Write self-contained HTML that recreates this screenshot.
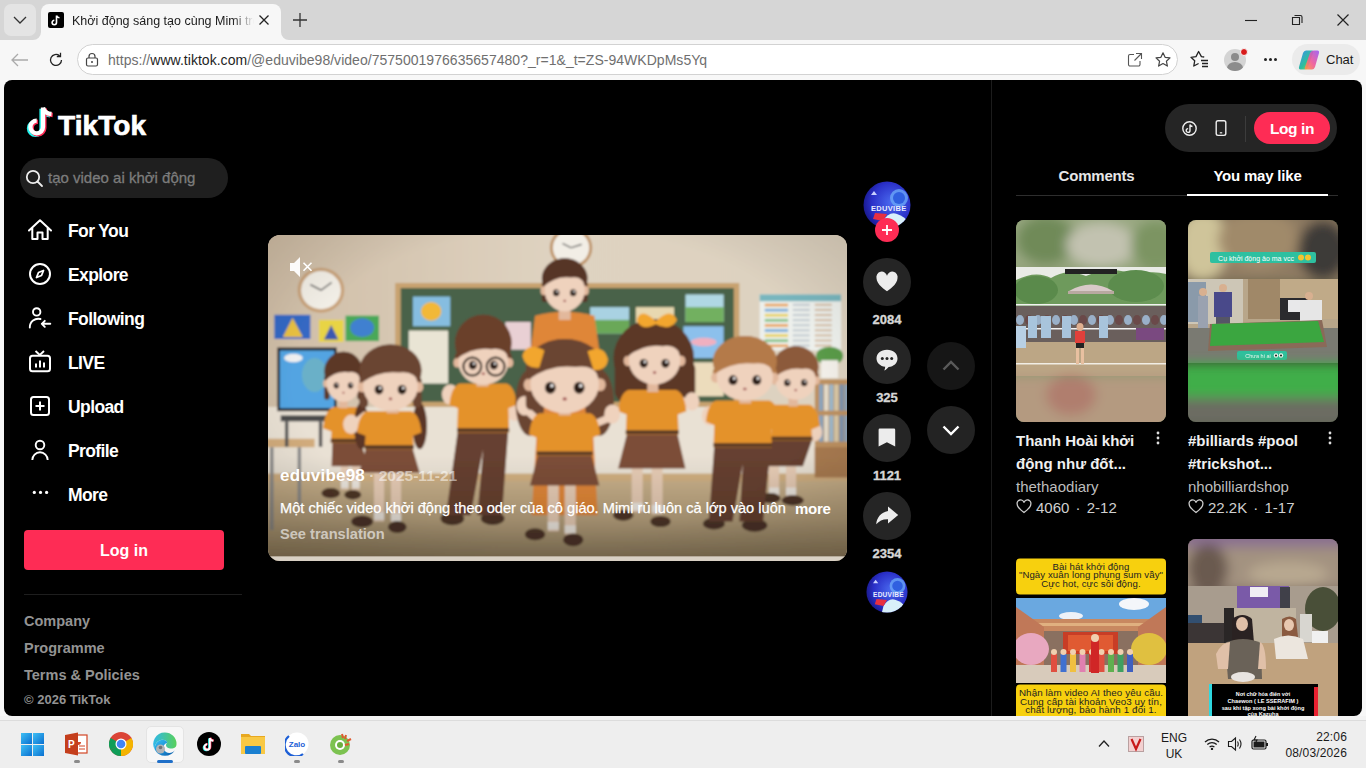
<!DOCTYPE html>
<html><head><meta charset="utf-8">
<style>
*{margin:0;padding:0;box-sizing:border-box}
html,body{width:1366px;height:768px;overflow:hidden;background:#f7f7f7;font-family:"Liberation Sans",sans-serif}
.a{position:absolute}
#tabstrip{left:0;top:0;width:1366px;height:40px;background:#d6d6d6}
#toolbar{left:0;top:40px;width:1366px;height:40px;background:#f7f7f7}
#page{left:4px;top:80px;width:1358px;height:636px;background:#000;border-radius:8px;overflow:hidden}
#taskbar{left:0;top:720px;width:1366px;height:48px;background:#eeeeee;border-top:1px solid #dcdcdc}
.nav{left:68px;color:#fff;font-weight:bold;font-size:17.5px;letter-spacing:-0.6px}
.foot{left:24px;color:#939393;font-weight:bold;font-size:14.5px}
.cnt{width:48px;text-align:center;color:#d6d6d6;font-weight:bold;font-size:13px;-webkit-text-stroke:.35px #d6d6d6}
.circ{width:48px;height:48px;border-radius:50%;background:#252525}
.ttl{color:#f0f0f0;font-weight:bold;font-size:15px;line-height:23px}
.sub{color:#bdbdbd;font-size:15px}
</style></head><body>
<!-- browser chrome -->
<div id="tabstrip" class="a"></div>
<div class="a" style="left:4px;top:4px;width:32px;height:32px;background:#e4e4e4;border-radius:7px"></div>
<svg class="a" style="left:12px;top:14px" width="16" height="12" viewBox="0 0 16 12"><path d="M2 3 L8 9 L14 3" fill="none" stroke="#333" stroke-width="1.3"/></svg>
<div class="a" style="left:41px;top:4px;width:240px;height:36px;background:#f7f7f7;border-radius:8px 8px 0 0"></div><svg class="a" style="left:0;top:0" width="300" height="40"><path d="M281 32 V40 H289 A8 8 0 0 1 281 32 Z" fill="#f7f7f7"/><path d="M41 32 V40 H33 A8 8 0 0 0 41 32 Z" fill="#f7f7f7"/></svg>
<div class="a" style="left:48px;top:12px;width:16px;height:16px;background:#000;border-radius:2px"></div>
<svg class="a" style="left:48px;top:12px" width="16" height="16" viewBox="0 0 16 16"><path d="M8.5 3.5 V10.5 A2.2 2.2 0 1 1 6.3 8.3 M8.5 3.5 Q9 5.5 11.5 5.8" fill="none" stroke="#fff" stroke-width="1.6"/></svg>
<div class="a" style="left:72px;top:14px;width:182px;height:18px;overflow:hidden;white-space:nowrap;font-size:12.5px;color:#1a1a1a;-webkit-mask-image:linear-gradient(90deg,#000 88%,transparent)">Khởi động sáng tạo cùng Mimi trong lớp</div>
<svg class="a" style="left:258px;top:14px" width="12" height="12" viewBox="0 0 12 12"><path d="M1.5 1.5 L10.5 10.5 M10.5 1.5 L1.5 10.5" stroke="#222" stroke-width="1.3"/></svg>
<svg class="a" style="left:292px;top:12px" width="16" height="16" viewBox="0 0 16 16"><path d="M8 1 V15 M1 8 H15" stroke="#333" stroke-width="1.3"/></svg>
<svg class="a" style="left:1244px;top:14px" width="14" height="12" viewBox="0 0 14 12"><path d="M1 6.5 H13" stroke="#222" stroke-width="1.1"/></svg>
<svg class="a" style="left:1290px;top:14px" width="14" height="12" viewBox="0 0 14 12"><path d="M2.5 3.5 h7 v7 h-7 z M4.5 1.5 h6 a1.5 1.5 0 0 1 1.5 1.5 v6" fill="none" stroke="#222" stroke-width="1.1"/></svg>
<svg class="a" style="left:1336px;top:14px" width="14" height="12" viewBox="0 0 14 12"><path d="M1.5 0.5 L12.5 11.5 M12.5 0.5 L1.5 11.5" stroke="#222" stroke-width="1.2"/></svg>

<div id="toolbar" class="a"></div>
<svg class="a" style="left:10px;top:52px" width="20" height="16" viewBox="0 0 20 16"><path d="M18 8 H3 M8 2 L2 8 L8 14" fill="none" stroke="#aaa" stroke-width="1.3"/></svg>
<svg class="a" style="left:47px;top:51px" width="18" height="18" viewBox="0 0 18 18"><path d="M14.5 9 A5.5 5.5 0 1 1 12.5 4.7 M13.5 1.8 V5.5 H9.8" fill="none" stroke="#222" stroke-width="1.3"/></svg>
<div class="a" style="left:77px;top:44px;width:1101px;height:31px;background:#fff;border:1px solid #d2d2d2;border-radius:16px"></div>
<svg class="a" style="left:85px;top:52px" width="14" height="15" viewBox="0 0 14 15"><rect x="1.5" y="6" width="11" height="8" rx="1.5" fill="none" stroke="#444" stroke-width="1.2"/><path d="M4 6 V4.5 A3 3 0 0 1 10 4.5 V6" fill="none" stroke="#444" stroke-width="1.2"/><circle cx="7" cy="10" r="1" fill="#444"/></svg>
<div class="a" style="left:108px;top:52px;font-size:14px;letter-spacing:0.03px;color:#6f6f6f;white-space:nowrap">https://<span style="color:#1f1f1f">www.tiktok.com</span>/@eduvibe98/video/7575001976635657480?_r=1&amp;_t=ZS-94WKDpMs5Yq</div>
<svg class="a" style="left:1127px;top:52px" width="16" height="16" viewBox="0 0 16 16"><path d="M7 2.5 H3 a1.5 1.5 0 0 0 -1.5 1.5 v8.5 a1.5 1.5 0 0 0 1.5 1.5 h8.5 a1.5 1.5 0 0 0 1.5 -1.5 V9 M9 1.5 H14.5 V7 M14.5 1.5 L7.5 8.5" fill="none" stroke="#555" stroke-width="1.1"/></svg>
<svg class="a" style="left:1154px;top:51px" width="18" height="18" viewBox="0 0 18 18"><path d="M9 1.8 L11.1 6.3 L16 6.9 L12.4 10.2 L13.4 15.1 L9 12.6 L4.6 15.1 L5.6 10.2 L2 6.9 L6.9 6.3 Z" fill="none" stroke="#444" stroke-width="1.2" stroke-linejoin="round"/></svg>
<svg class="a" style="left:1190px;top:50px" width="19" height="19" viewBox="0 0 19 19"><path d="M14.2 7 L11.4 6.6 L8.6 1.5 L6 6.6 L1 7.3 L4.7 10.8 L3.8 16 L8.6 13.5" fill="none" stroke="#222" stroke-width="1.3" stroke-linejoin="round"/><path d="M11 10.5 h7 M12 13.5 h6 M12 16.5 h6" stroke="#222" stroke-width="1.3"/></svg>
<div class="a" style="left:1224px;top:49px;width:22px;height:22px;border-radius:50%;background:#d4d4d4;overflow:hidden"><div class="a" style="left:7px;top:4px;width:8px;height:8px;border-radius:50%;background:#8c8c8c"></div><div class="a" style="left:3px;top:13px;width:16px;height:12px;border-radius:50%;background:#8c8c8c"></div></div>
<div class="a" style="left:1240px;top:48px;width:8px;height:8px;border-radius:50%;background:#d81b1b;border:1px solid #f7f7f7"></div>
<div class="a" style="left:1264px;top:58px;width:3px;height:3px;border-radius:50%;background:#222;box-shadow:5px 0 #222,10px 0 #222"></div>
<div class="a" style="left:1292px;top:44px;width:68px;height:31px;background:#ebebeb;border-radius:16px"></div>
<svg class="a" style="left:1297px;top:48px" width="24" height="24" viewBox="0 0 24 24"><defs><linearGradient id="cp1" x1="0" y1="0" x2="1" y2="1"><stop offset="0" stop-color="#3b8df5"/><stop offset=".55" stop-color="#2fbf9a"/><stop offset="1" stop-color="#a8d84a"/></linearGradient><linearGradient id="cp2" x1="1" y1="0" x2="0" y2="1"><stop offset="0" stop-color="#9a5cf5"/><stop offset=".55" stop-color="#f05a9a"/><stop offset="1" stop-color="#ff9a3a"/></linearGradient></defs><path d="M9 2.5 H15 Q17 2.5 16 5 L11 19 Q10 21.5 7.5 21.5 H3.5 Q1.5 21.5 2 19 L6 5 Q7 2.5 9 2.5 Z" fill="url(#cp1)"/><path d="M16.5 2.5 H20.5 Q22.5 2.5 22 5 L18 19 Q17 21.5 15 21.5 H9 Q7 21.5 8 19 L13 5 Q14 2.5 16.5 2.5 Z" fill="url(#cp2)" opacity=".92"/></svg>
<div class="a" style="left:1326px;top:52px;font-size:13px;color:#1a1a1a">Chat</div>

<!-- page -->
<div id="page" class="a"></div>
<!-- sidebar -->
<svg class="a" style="left:24px;top:103px" width="34" height="36" viewBox="0 0 34 36">
<path d="M19 4.5 V24 A6.3 6.3 0 1 1 12.7 17.7 M19 4.5 Q20.5 10.5 27.5 11" fill="none" stroke="#25f4ee" stroke-width="4.6" transform="translate(-1.3,1.3)"/>
<path d="M19 4.5 V24 A6.3 6.3 0 1 1 12.7 17.7 M19 4.5 Q20.5 10.5 27.5 11" fill="none" stroke="#fe2c55" stroke-width="4.6" transform="translate(1.2,1)"/>
<path d="M19 4.5 V24 A6.3 6.3 0 1 1 12.7 17.7 M19 4.5 Q20.5 10.5 27.5 11" fill="none" stroke="#fff" stroke-width="4.3"/>
</svg>
<div class="a" style="left:58px;top:110px;font-size:28px;font-weight:bold;color:#fff;letter-spacing:0.1px;-webkit-text-stroke:0.7px #fff">TikTok</div>
<div class="a" style="left:20px;top:158px;width:208px;height:40px;border-radius:20px;background:#1f1f1f"></div>
<svg class="a" style="left:25px;top:169px" width="19" height="19" viewBox="0 0 19 19"><circle cx="8" cy="8" r="6.2" fill="none" stroke="#eee" stroke-width="1.8"/><path d="M12.5 12.5 L17 17" stroke="#eee" stroke-width="1.8" stroke-linecap="round"/></svg>
<div class="a" style="left:48px;top:169px;font-size:15px;color:#7c7c7c;-webkit-text-stroke:.3px #7c7c7c">tạo video ai khởi động</div>

<svg class="a" style="left:28px;top:218px" width="24" height="24" viewBox="0 0 24 24"><path d="M1 12.5 L12 2.3 L23 12.5 M4.3 9.8 V21 H9.5 V14.5 H14.5 V21 H19.7 V9.8" fill="none" stroke="#fff" stroke-width="2" stroke-linejoin="round" stroke-linecap="round"/></svg>
<div class="a nav" style="top:220.5px">For You</div>
<svg class="a" style="left:28px;top:262px" width="24" height="24" viewBox="0 0 24 24"><circle cx="12" cy="12" r="10" fill="none" stroke="#fff" stroke-width="2"/><path d="M15.5 8.5 L13.5 13.5 L8.5 15.5 L10.5 10.5 Z" fill="none" stroke="#fff" stroke-width="1.8" stroke-linejoin="round"/></svg>
<div class="a nav" style="top:264.5px">Explore</div>
<svg class="a" style="left:28px;top:306px" width="24" height="24" viewBox="0 0 24 24"><circle cx="8.7" cy="5.9" r="3.7" fill="none" stroke="#fff" stroke-width="1.9"/><path d="M1.8 21.5 A8.5 8.5 0 0 1 12.5 13 M22.3 17.8 H13.8 M16.8 14.8 L13.8 17.8 L16.8 20.8" fill="none" stroke="#fff" stroke-width="1.9" stroke-linecap="round" stroke-linejoin="round"/></svg>
<div class="a nav" style="top:308.5px">Following</div>
<svg class="a" style="left:28px;top:350px" width="24" height="24" viewBox="0 0 24 24"><rect x="2" y="5.8" width="20" height="15.5" rx="2.5" fill="none" stroke="#fff" stroke-width="2"/><path d="M7.5 1 L11.8 5 L16 1" fill="none" stroke="#fff" stroke-width="1.9"/><path d="M8 17.5 V13.5 M12 17.5 V10.5 M16 17.5 V12.5" stroke="#fff" stroke-width="2"/></svg>
<div class="a nav" style="top:352.5px">LIVE</div>
<svg class="a" style="left:28px;top:394px" width="24" height="24" viewBox="0 0 24 24"><rect x="3" y="3" width="18" height="18" rx="2.5" fill="none" stroke="#fff" stroke-width="2"/><path d="M12 7.5 V16.5 M7.5 12 H16.5" stroke="#fff" stroke-width="2"/></svg>
<div class="a nav" style="top:396.5px">Upload</div>
<svg class="a" style="left:28px;top:438px" width="24" height="24" viewBox="0 0 24 24"><circle cx="12" cy="7" r="4.3" fill="none" stroke="#fff" stroke-width="1.9"/><path d="M4.3 22 A7.7 7.7 0 0 1 19.7 22" fill="none" stroke="#fff" stroke-width="1.9"/></svg>
<div class="a nav" style="top:440.5px">Profile</div>
<svg class="a" style="left:28px;top:482px" width="24" height="24" viewBox="0 0 24 24"><circle cx="6.3" cy="10.4" r="1.6" fill="#fff"/><circle cx="12.5" cy="10.4" r="1.6" fill="#fff"/><circle cx="18.6" cy="10.4" r="1.6" fill="#fff"/></svg>
<div class="a nav" style="top:484.5px">More</div>

<div class="a" style="left:24px;top:530px;width:200px;height:40px;border-radius:4px;background:#fe2c55;color:#fff;font-weight:bold;font-size:16px;text-align:center;line-height:42px">Log in</div>
<div class="a" style="left:24px;top:594px;width:218px;height:1px;background:#1e1e1e"></div>
<div class="a foot" style="top:613px">Company</div>
<div class="a foot" style="top:640px">Programme</div>
<div class="a foot" style="top:667px">Terms &amp; Policies</div>
<div class="a foot" style="top:692px;font-size:13px">© 2026 TikTok</div>

<!-- video -->
<div id="video" class="a" style="left:268px;top:235px;width:579px;height:326px;border-radius:12px;overflow:hidden;background:#d9c8b0">
<svg class="a" style="left:0;top:0" width="579" height="326" viewBox="0 0 1366 768" preserveAspectRatio="none"><defs><linearGradient id="wall" x1="0" y1="0" x2="1" y2="0"><stop offset="0" stop-color="#cfbda6"/><stop offset=".5" stop-color="#dfd3c1"/><stop offset="1" stop-color="#ddd2c0"/></linearGradient><linearGradient id="floor" x1="0" y1="0" x2="0" y2="1"><stop offset="0" stop-color="#c8b08a"/><stop offset=".45" stop-color="#b8a27e"/><stop offset="1" stop-color="#8e7c5c"/></linearGradient><linearGradient id="shade" x1="0" y1="0" x2="0" y2="1"><stop offset="0" stop-color="#000" stop-opacity="0"/><stop offset="1" stop-color="#000" stop-opacity=".22"/></linearGradient><radialGradient id="vig" cx=".5" cy=".45" r=".75"><stop offset=".6" stop-color="#000" stop-opacity="0"/><stop offset="1" stop-color="#3a2a10" stop-opacity=".18"/></radialGradient><filter id="bl" x="-5%" y="-5%" width="110%" height="110%"><feGaussianBlur stdDeviation="2.2"/></filter></defs>
<g filter="url(#bl)">
<rect x="-10" y="-10" width="1386" height="790" rx="0" fill="url(#wall)" />
<rect x="-10" y="405" width="1386" height="175" rx="0" fill="#e9e1d4" />
<rect x="-10" y="575" width="1386" height="210" rx="0" fill="url(#floor)" />
<rect x="-10" y="562" width="1386" height="18" rx="0" fill="#cfae80" />
<rect x="300" y="113" width="812" height="292" rx="0" fill="#c8a270" />
<rect x="313" y="125" width="786" height="268" rx="0" fill="#486248" />
<rect x="342" y="145" width="88" height="70" rx="0" fill="#86bde0" /><ellipse cx="385" cy="180" rx="24" ry="22" fill="#f2b838" />
<rect x="332" y="225" width="93" height="125" rx="0" fill="#e9e4d4" />
<rect x="560" y="205" width="60" height="65" rx="0" fill="#e9d0d4" />
<rect x="760" y="170" width="92" height="62" rx="0" fill="#a9d2e2" /><rect x="760" y="200" width="92" height="32" rx="0" fill="#6aa858" />
<rect x="868" y="170" width="90" height="45" rx="0" fill="#e8d8b0" />
<rect x="985" y="140" width="90" height="65" rx="0" fill="#b0d8e4" /><rect x="985" y="170" width="90" height="35" rx="0" fill="#72b060" />
<rect x="980" y="215" width="95" height="75" rx="0" fill="#8cc0ec" /><ellipse cx="1028" cy="252" rx="30" ry="10" fill="#f0b0c0" />
<rect x="1000" y="300" width="75" height="80" rx="0" fill="#ecdcbc" />
<ellipse cx="715" cy="30" rx="50" ry="48" fill="#bf956a" /><ellipse cx="715" cy="30" rx="43" ry="41" fill="#f2eee6" />
<ellipse cx="125" cy="130" rx="55" ry="53" fill="#c8a27a" /><ellipse cx="125" cy="130" rx="47" ry="45" fill="#f2eee6" />
<path d="M125 130 L100 117 M125 130 L150 112 M715 30 L695 20 M715 30 L740 22" stroke="#444" stroke-width="3"/>
<rect x="15" y="188" width="85" height="57" rx="0" fill="#3468c4" /><polygon points="58,195 35,240 82,240" fill="#e8c040" />
<rect x="120" y="200" width="58" height="52" rx="0" fill="#e8d444" /><polygon points="149,212 132,246 166,246" fill="#3a58b0" />
<rect x="183" y="190" width="79" height="60" rx="0" fill="#48a858" /><ellipse cx="222" cy="218" rx="28" ry="22" fill="#4080d0" />
<rect x="22" y="265" width="140" height="150" rx="0" fill="#26262c" /><rect x="28" y="272" width="128" height="136" rx="0" fill="#52a4e2" /><ellipse cx="60" cy="290" rx="22" ry="10" fill="#f0f0f0" /><ellipse cx="110" cy="330" rx="30" ry="40" fill="#6ab0c8" />
<rect x="-5" y="480" width="115" height="20" rx="0" fill="#d2ac7c" /><rect x="5" y="500" width="8" height="195" rx="0" fill="#8a8a8a" /><rect x="70" y="500" width="8" height="140" rx="0" fill="#8a8a8a" />
<rect x="30" y="425" width="120" height="14" rx="0" fill="#4a4a4a" /><rect x="40" y="439" width="8" height="60" rx="0" fill="#555" /><rect x="120" y="439" width="8" height="60" rx="0" fill="#555" />
<rect x="1160" y="140" width="192" height="132" rx="0" fill="#edf0ec" /><rect x="1160" y="140" width="192" height="16" rx="0" fill="#78b6be" />
<rect x="1172" y="162" width="55" height="6" rx="0" fill="#e8a050" /><rect x="1238" y="162" width="40" height="5" rx="0" fill="#c4ccd2" /><rect x="1290" y="162" width="40" height="5" rx="0" fill="#d6bea6" />
<rect x="1172" y="174" width="55" height="6" rx="0" fill="#70a8d8" /><rect x="1238" y="174" width="40" height="5" rx="0" fill="#c4ccd2" /><rect x="1290" y="174" width="40" height="5" rx="0" fill="#d6bea6" />
<rect x="1172" y="186" width="55" height="6" rx="0" fill="#e8d050" /><rect x="1238" y="186" width="40" height="5" rx="0" fill="#c4ccd2" /><rect x="1290" y="186" width="40" height="5" rx="0" fill="#d6bea6" />
<rect x="1172" y="198" width="55" height="6" rx="0" fill="#80c080" /><rect x="1238" y="198" width="40" height="5" rx="0" fill="#c4ccd2" /><rect x="1290" y="198" width="40" height="5" rx="0" fill="#d6bea6" />
<rect x="1172" y="210" width="55" height="6" rx="0" fill="#e8a050" /><rect x="1238" y="210" width="40" height="5" rx="0" fill="#c4ccd2" /><rect x="1290" y="210" width="40" height="5" rx="0" fill="#d6bea6" />
<rect x="1172" y="222" width="55" height="6" rx="0" fill="#70a8d8" /><rect x="1238" y="222" width="40" height="5" rx="0" fill="#c4ccd2" /><rect x="1290" y="222" width="40" height="5" rx="0" fill="#d6bea6" />
<rect x="1172" y="234" width="55" height="6" rx="0" fill="#e8d050" /><rect x="1238" y="234" width="40" height="5" rx="0" fill="#c4ccd2" /><rect x="1290" y="234" width="40" height="5" rx="0" fill="#d6bea6" />
<rect x="1172" y="246" width="55" height="6" rx="0" fill="#80c080" /><rect x="1238" y="246" width="40" height="5" rx="0" fill="#c4ccd2" /><rect x="1290" y="246" width="40" height="5" rx="0" fill="#d6bea6" />
<rect x="1172" y="258" width="55" height="6" rx="0" fill="#e8a050" /><rect x="1238" y="258" width="40" height="5" rx="0" fill="#c4ccd2" /><rect x="1290" y="258" width="40" height="5" rx="0" fill="#d6bea6" />
<ellipse cx="1325" cy="285" rx="32" ry="22" fill="#5a9a48" /><rect x="1305" y="295" width="40" height="42" rx="0" fill="#f2eee8" />
<rect x="1290" y="340" width="80" height="232" rx="0" fill="#bc9060" />
<rect x="1300" y="352" width="10" height="62" rx="0" fill="#8aa4bc" />
<rect x="1312" y="352" width="10" height="62" rx="0" fill="#e4dccc" />
<rect x="1324" y="352" width="10" height="62" rx="0" fill="#9cb8cc" />
<rect x="1336" y="352" width="10" height="62" rx="0" fill="#d8c8a8" />
<rect x="1348" y="352" width="10" height="62" rx="0" fill="#7c94b0" />
<rect x="1360" y="352" width="10" height="62" rx="0" fill="#8aa4bc" />
<rect x="1300" y="425" width="10" height="62" rx="0" fill="#8aa4bc" />
<rect x="1312" y="425" width="10" height="62" rx="0" fill="#e4dccc" />
<rect x="1324" y="425" width="10" height="62" rx="0" fill="#9cb8cc" />
<rect x="1336" y="425" width="10" height="62" rx="0" fill="#d8c8a8" />
<rect x="1348" y="425" width="10" height="62" rx="0" fill="#7c94b0" />
<rect x="1360" y="425" width="10" height="62" rx="0" fill="#8aa4bc" />
<rect x="1290" y="500" width="80" height="70" rx="0" fill="#a87a50" />
<path d="M630 190 Q700 172 770 190 L790 330 L765 430 L778 660 L622 660 L636 430 L612 330 Z" fill="#df8638" />
<rect x="686" y="165" width="28" height="35" rx="0" fill="#e2b89c" />
<ellipse cx="700" cy="102.375" rx="54.0" ry="47.375" fill="#573425" />
<rect x="646.0" y="108.5" width="15.0" height="49.49999999999999" rx="7.5" fill="#573425" />
<rect x="739.0" y="108.5" width="15.0" height="49.49999999999999" rx="7.5" fill="#573425" />
<ellipse cx="651.0" cy="130.5" rx="8.0" ry="11.0" fill="#e2b89c" />
<ellipse cx="749.0" cy="130.5" rx="8.0" ry="11.0" fill="#e2b89c" />
<ellipse cx="700" cy="129.4" rx="47.5" ry="50.6" fill="#efd2bd" />
<path d="M649.0,122.25 Q647.5,55 700,55 Q752.5,55 751.0,122.25 Q740.0,94.75 715.0,100.25 Q680.0,94.75 649.0,122.25 Z" fill="#573425" />
<ellipse cx="680.0" cy="136.0" rx="7.5" ry="8.25" fill="#2c1c16" />
<ellipse cx="682.25" cy="133.0" rx="2.25" ry="2.25" fill="#fff" />
<ellipse cx="720.0" cy="136.0" rx="7.5" ry="8.25" fill="#2c1c16" />
<ellipse cx="722.25" cy="133.0" rx="2.25" ry="2.25" fill="#fff" />
<ellipse cx="700" cy="155.25" rx="3.0" ry="2.75" fill="#a05050" />
<path d="M1280,420 L1290,470" stroke="#efd2bd" stroke-width="16" stroke-linecap="round"/>
<ellipse cx="1290" cy="464" rx="17.6" ry="21.6" fill="#efd2bd" />
<rect x="1182" y="545" width="24" height="72" rx="0" fill="#e6cbb4" />
<rect x="1222" y="545" width="24" height="72" rx="0" fill="#e6cbb4" />
<rect x="1182" y="595" width="24" height="18" rx="0" fill="#eee8e0" />
<rect x="1222" y="595" width="24" height="18" rx="0" fill="#eee8e0" />
<ellipse cx="1185" cy="620" rx="24" ry="12" fill="#4e3528" />
<ellipse cx="1238" cy="625" rx="26" ry="12" fill="#4e3528" />
<polygon points="1185,479 1285,479 1262,545 1170,545" fill="#664030" />
<path d="M1192,400 L1278,400 Q1298,408 1302,450 L1282,458 L1284,485 L1186,485 L1188,458 L1168,450 Q1172,408 1192,400 Z" fill="#e4922c" />
<rect x="1186" y="475" width="98" height="9" rx="0" fill="#5a3a28" />
<rect x="1228" y="372" width="22" height="32" rx="0" fill="#e2b89c" />
<ellipse cx="1245" cy="311.25" rx="54.0" ry="49.25" fill="#8c5a3a" />
<rect x="1191.0" y="323.0" width="15.0" height="20.0" rx="7.5" fill="#8c5a3a" />
<rect x="1284.0" y="323.0" width="15.0" height="20.0" rx="7.5" fill="#8c5a3a" />
<ellipse cx="1196.0" cy="343.0" rx="8.0" ry="10.0" fill="#e2b89c" />
<ellipse cx="1294.0" cy="343.0" rx="8.0" ry="10.0" fill="#e2b89c" />
<ellipse cx="1245" cy="342.0" rx="47.5" ry="46.0" fill="#efd2bd" />
<path d="M1194.0,335.5 Q1192.5,262 1245,262 Q1297.5,262 1296.0,335.5 Q1285.0,310.5 1260.0,315.5 Q1225.0,310.5 1194.0,335.5 Z" fill="#8c5a3a" />
<ellipse cx="1225.0" cy="348.0" rx="7.5" ry="8.25" fill="#2c1c16" />
<ellipse cx="1227.25" cy="345.0" rx="2.25" ry="2.25" fill="#fff" />
<ellipse cx="1265.0" cy="348.0" rx="7.5" ry="8.25" fill="#2c1c16" />
<ellipse cx="1267.25" cy="345.0" rx="2.25" ry="2.25" fill="#fff" />
<ellipse cx="1245" cy="365.5" rx="3.0" ry="2.5" fill="#a05050" />
<rect x="172" y="545" width="18" height="55" rx="0" fill="#e6cbb4" />
<rect x="198" y="545" width="18" height="55" rx="0" fill="#e6cbb4" />
<rect x="172" y="578" width="18" height="18" rx="0" fill="#eee8e0" />
<rect x="198" y="578" width="18" height="18" rx="0" fill="#eee8e0" />
<ellipse cx="148" cy="608" rx="22" ry="12" fill="#4e3528" />
<ellipse cx="200" cy="612" rx="20" ry="11" fill="#4e3528" />
<polygon points="152,484 218,484 236,545 150,545" fill="#7c4e38" />
<path d="M154,405 L216,405 Q236,413 240,455 L220,463 L222,490 L148,490 L150,463 L130,455 Q134,413 154,405 Z" fill="#e4922c" />
<rect x="148" y="480" width="74" height="9" rx="0" fill="#5a3a28" />
<rect x="168" y="378" width="20" height="30" rx="0" fill="#e2b89c" />
<ellipse cx="178" cy="320.8" rx="45.36" ry="45.80000000000001" fill="#5c3828" />
<rect x="132.64" y="330.6" width="12.6" height="57.599999999999994" rx="6.3" fill="#5c3828" />
<rect x="210.76" y="330.6" width="12.6" height="57.599999999999994" rx="6.3" fill="#5c3828" />
<ellipse cx="136.84" cy="349.8" rx="6.72" ry="9.600000000000001" fill="#e2b89c" />
<ellipse cx="219.16" cy="349.8" rx="6.72" ry="9.600000000000001" fill="#e2b89c" />
<ellipse cx="178" cy="348.84" rx="39.9" ry="44.160000000000004" fill="#efd2bd" />
<path d="M135.16,342.6 Q133.9,275 178,275 Q222.1,275 220.84,342.6 Q211.6,318.6 190.6,323.4 Q161.2,318.6 135.16,342.6 Z" fill="#5c3828" />
<ellipse cx="161.2" cy="354.6" rx="6.3" ry="6.930000000000001" fill="#2c1c16" />
<ellipse cx="163.08999999999997" cy="352.08000000000004" rx="1.89" ry="1.89" fill="#fff" />
<ellipse cx="194.8" cy="354.6" rx="6.3" ry="6.930000000000001" fill="#2c1c16" />
<ellipse cx="196.69" cy="352.08000000000004" rx="1.89" ry="1.89" fill="#fff" />
<ellipse cx="178" cy="371.4" rx="2.52" ry="2.4000000000000004" fill="#a05050" />
<path d="M440,375 L430,382" stroke="#efd2bd" stroke-width="18" stroke-linecap="round"/>
<ellipse cx="430" cy="376" rx="19.8" ry="24.3" fill="#efd2bd" />
<path d="M568,375 L582,420" stroke="#efd2bd" stroke-width="18" stroke-linecap="round"/>
<ellipse cx="582" cy="414" rx="19.8" ry="24.3" fill="#efd2bd" />
<ellipse cx="435" cy="668" rx="28" ry="16" fill="#4e3528" />
<ellipse cx="530" cy="668" rx="28" ry="15" fill="#4e3528" />
<polygon points="448,459 567,459 552,660 494.0,660 507.5,505 478.0,660 420,660" fill="#664030" />
<path d="M452,350 L563,350 Q583,358 587,400 L567,408 L569,465 L446,465 L448,408 L428,400 Q432,358 452,350 Z" fill="#e4922c" />
<rect x="446" y="455" width="123" height="9" rx="0" fill="#5a3a28" />
<rect x="492" y="335" width="28" height="22" rx="0" fill="#e2b89c" />
<ellipse cx="508" cy="254.55" rx="66.96000000000001" ry="66.55000000000001" fill="#6a402c" />
<rect x="441.03999999999996" y="277.6" width="18.599999999999998" height="26.099999999999998" rx="9.299999999999999" fill="#6a402c" />
<rect x="556.36" y="277.6" width="18.599999999999998" height="26.099999999999998" rx="9.299999999999999" fill="#6a402c" />
<ellipse cx="447.24" cy="300.8" rx="9.92" ry="11.600000000000001" fill="#e2b89c" />
<ellipse cx="568.76" cy="300.8" rx="9.92" ry="11.600000000000001" fill="#e2b89c" />
<ellipse cx="508" cy="299.64" rx="58.9" ry="53.36" fill="#efd2bd" />
<path d="M444.76,292.1 Q442.9,188 508,188 Q573.1,188 571.24,292.1 Q557.6,263.1 526.6,268.9 Q483.2,263.1 444.76,292.1 Z" fill="#6a402c" />
<ellipse cx="483.2" cy="306.6" rx="9.299999999999999" ry="10.23" fill="#2c1c16" />
<ellipse cx="485.99" cy="302.88" rx="2.7899999999999996" ry="2.7899999999999996" fill="#fff" />
<ellipse cx="532.8" cy="306.6" rx="9.299999999999999" ry="10.23" fill="#2c1c16" />
<ellipse cx="535.5899999999999" cy="302.88" rx="2.7899999999999996" ry="2.7899999999999996" fill="#fff" />
<ellipse cx="508" cy="326.9" rx="3.7199999999999998" ry="2.9000000000000004" fill="#a05050" />
<g fill="none" stroke="#2a2018" stroke-width="5"><circle cx="482" cy="310" r="21"/><circle cx="537" cy="310" r="21"/></g>
<ellipse cx="910" cy="290" rx="95" ry="92" fill="#5c3826" /><rect x="818" y="290" width="58" height="105" rx="28" fill="#5c3826" /><rect x="948" y="290" width="60" height="105" rx="28" fill="#5c3826" />
<path d="M965,385 L1000,398" stroke="#efd2bd" stroke-width="16" stroke-linecap="round"/>
<ellipse cx="1000" cy="392" rx="17.6" ry="21.6" fill="#efd2bd" />
<rect x="858" y="548" width="26" height="105" rx="0" fill="#e6cbb4" />
<rect x="905" y="548" width="26" height="110" rx="0" fill="#e6cbb4" />
<rect x="858" y="631" width="26" height="18" rx="0" fill="#eee8e0" />
<rect x="905" y="636" width="26" height="18" rx="0" fill="#eee8e0" />
<ellipse cx="838" cy="660" rx="24" ry="13" fill="#4e3528" />
<ellipse cx="926" cy="675" rx="24" ry="13" fill="#4e3528" />
<polygon points="848,464 965,464 985,550 826,550" fill="#7c4e38" />
<path d="M850,365 L963,365 Q983,373 987,415 L967,423 L969,470 L844,470 L846,423 L826,415 Q830,373 850,365 Z" fill="#e4922c" />
<rect x="844" y="460" width="125" height="9" rx="0" fill="#5a3a28" />
<rect x="895" y="345" width="26" height="25" rx="0" fill="#e2b89c" />
<ellipse cx="912" cy="261.45" rx="69.12" ry="56.44999999999999" fill="#5c3826" />
<ellipse cx="849.28" cy="296.2" rx="10.24" ry="12.4" fill="#e2b89c" />
<ellipse cx="974.72" cy="296.2" rx="10.24" ry="12.4" fill="#e2b89c" />
<ellipse cx="912" cy="294.96" rx="60.8" ry="57.04" fill="#efd2bd" />
<path d="M846.72,286.9 Q844.8,205 912,205 Q979.2,205 977.28,286.9 Q963.2,255.9 931.2,262.1 Q886.4,255.9 846.72,286.9 Z" fill="#5c3826" />
<ellipse cx="886.4" cy="302.4" rx="9.6" ry="10.56" fill="#2c1c16" />
<ellipse cx="889.28" cy="298.56" rx="2.88" ry="2.88" fill="#fff" />
<ellipse cx="937.6" cy="302.4" rx="9.6" ry="10.56" fill="#2c1c16" />
<ellipse cx="940.48" cy="298.56" rx="2.88" ry="2.88" fill="#fff" />
<ellipse cx="912" cy="324.1" rx="3.84" ry="3.1" fill="#a05050" />
<path d="M870 200 Q880 168 915 203 Q950 168 965 200 Q950 228 915 210 Q880 228 870 200 Z" fill="#f2a62e" />
<path d="M1055,410 L1042,432" stroke="#efd2bd" stroke-width="17" stroke-linecap="round"/>
<ellipse cx="1042" cy="426" rx="18.700000000000003" ry="22.950000000000003" fill="#efd2bd" />
<ellipse cx="1052" cy="680" rx="26" ry="14" fill="#4e3528" />
<ellipse cx="1148" cy="684" rx="30" ry="15" fill="#4e3528" />
<polygon points="1053,494 1187,494 1168,675 1112.0,675 1120.0,540 1096.0,675 1040,675" fill="#664030" />
<path d="M1057,390 L1183,390 Q1203,398 1207,440 L1187,448 L1189,500 L1051,500 L1053,448 L1033,440 Q1037,398 1057,390 Z" fill="#e4922c" />
<rect x="1051" y="490" width="138" height="9" rx="0" fill="#5a3a28" />
<rect x="1112" y="375" width="28" height="22" rx="0" fill="#e2b89c" />
<ellipse cx="1125" cy="297.5" rx="75.60000000000001" ry="59.5" fill="#b47a48" />
<rect x="1049.4" y="312.0" width="21.0" height="24.0" rx="10.5" fill="#b47a48" />
<rect x="1179.6" y="312.0" width="21.0" height="24.0" rx="10.5" fill="#b47a48" />
<ellipse cx="1056.4" cy="336.0" rx="11.200000000000001" ry="12.0" fill="#e2b89c" />
<ellipse cx="1193.6" cy="336.0" rx="11.200000000000001" ry="12.0" fill="#e2b89c" />
<ellipse cx="1125" cy="334.8" rx="66.5" ry="55.2" fill="#efd2bd" />
<path d="M1053.6,327.0 Q1051.5,238 1125,238 Q1198.5,238 1196.4,327.0 Q1181.0,297.0 1146.0,303.0 Q1097.0,297.0 1053.6,327.0 Z" fill="#b47a48" />
<ellipse cx="1097.0" cy="342.0" rx="10.5" ry="11.55" fill="#2c1c16" />
<ellipse cx="1100.15" cy="337.8" rx="3.15" ry="3.15" fill="#fff" />
<ellipse cx="1153.0" cy="342.0" rx="10.5" ry="11.55" fill="#2c1c16" />
<ellipse cx="1156.15" cy="337.8" rx="3.15" ry="3.15" fill="#fff" />
<ellipse cx="1125" cy="363.0" rx="4.2" ry="3.0" fill="#a05050" />
<ellipse cx="220" cy="450" rx="17" ry="55" fill="#5a3626" /><ellipse cx="358" cy="450" rx="17" ry="55" fill="#5a3626" />
<path d="M228,425 L196,452" stroke="#efd2bd" stroke-width="17" stroke-linecap="round"/>
<ellipse cx="196" cy="446" rx="18.700000000000003" ry="22.950000000000003" fill="#efd2bd" />
<rect x="250" y="560" width="24" height="115" rx="0" fill="#e6cbb4" />
<rect x="290" y="560" width="24" height="118" rx="0" fill="#e6cbb4" />
<rect x="250" y="653" width="24" height="18" rx="0" fill="#eee8e0" />
<rect x="290" y="656" width="24" height="18" rx="0" fill="#eee8e0" />
<ellipse cx="222" cy="675" rx="26" ry="14" fill="#4e3528" />
<ellipse cx="305" cy="688" rx="22" ry="14" fill="#4e3528" />
<polygon points="232,499 340,499 358,560 215,560" fill="#7c4e38" />
<path d="M234,415 L338,415 Q358,423 362,465 L342,473 L344,505 L228,505 L230,473 L210,465 Q214,423 234,415 Z" fill="#e4922c" />
<rect x="228" y="495" width="116" height="9" rx="0" fill="#5a3a28" />
<rect x="280" y="395" width="28" height="25" rx="0" fill="#e2b89c" />
<ellipse cx="289" cy="318.95" rx="73.44" ry="60.94999999999999" fill="#6a4430" />
<rect x="215.56" y="333.4" width="20.4" height="74.39999999999999" rx="10.2" fill="#6a4430" />
<rect x="342.04" y="333.4" width="20.4" height="74.39999999999999" rx="10.2" fill="#6a4430" />
<ellipse cx="222.36" cy="358.2" rx="10.88" ry="12.4" fill="#e2b89c" />
<ellipse cx="355.64" cy="358.2" rx="10.88" ry="12.4" fill="#e2b89c" />
<ellipse cx="289" cy="356.96" rx="64.6" ry="57.04" fill="#efd2bd" />
<path d="M219.64,348.9 Q217.6,258 289,258 Q360.4,258 358.36,348.9 Q343.4,317.9 309.4,324.1 Q261.8,317.9 219.64,348.9 Z" fill="#6a4430" />
<ellipse cx="261.8" cy="364.4" rx="10.2" ry="11.22" fill="#2c1c16" />
<ellipse cx="264.86" cy="360.32" rx="3.0599999999999996" ry="3.0599999999999996" fill="#fff" />
<ellipse cx="316.2" cy="364.4" rx="10.2" ry="11.22" fill="#2c1c16" />
<ellipse cx="319.26" cy="360.32" rx="3.0599999999999996" ry="3.0599999999999996" fill="#fff" />
<ellipse cx="289" cy="386.1" rx="4.08" ry="3.1" fill="#a05050" />
<ellipse cx="618" cy="395" rx="34" ry="78" fill="#6a4430" /><ellipse cx="782" cy="395" rx="34" ry="78" fill="#6a4430" />
<path d="M640,440 L605,408" stroke="#efd2bd" stroke-width="17" stroke-linecap="round"/>
<ellipse cx="605" cy="402" rx="18.700000000000003" ry="22.950000000000003" fill="#efd2bd" />
<path d="M760,450 L812,428" stroke="#efd2bd" stroke-width="17" stroke-linecap="round"/>
<ellipse cx="812" cy="422" rx="18.700000000000003" ry="22.950000000000003" fill="#efd2bd" />
<rect x="660" y="588" width="26" height="110" rx="0" fill="#e6cbb4" />
<rect x="700" y="588" width="26" height="118" rx="0" fill="#e6cbb4" />
<rect x="660" y="676" width="26" height="18" rx="0" fill="#eee8e0" />
<rect x="700" y="684" width="26" height="18" rx="0" fill="#eee8e0" />
<ellipse cx="630" cy="705" rx="24" ry="14" fill="#4e3528" />
<ellipse cx="720" cy="718" rx="24" ry="15" fill="#4e3528" />
<polygon points="638,514 762,514 782,590 618,590" fill="#7c4e38" />
<path d="M640,420 L760,420 Q780,428 784,470 L764,478 L766,520 L634,520 L636,478 L616,470 Q620,428 640,420 Z" fill="#e4922c" />
<rect x="634" y="510" width="132" height="9" rx="0" fill="#5a3a28" />
<rect x="686" y="400" width="28" height="25" rx="0" fill="#e2b89c" />
<ellipse cx="700" cy="311.875" rx="91.80000000000001" ry="66.875" fill="#6a4430" />
<rect x="608.2" y="322.5" width="25.5" height="90.0" rx="12.75" fill="#6a4430" />
<rect x="766.3" y="322.5" width="25.5" height="90.0" rx="12.75" fill="#6a4430" />
<ellipse cx="616.7" cy="352.5" rx="13.6" ry="15.0" fill="#e2b89c" />
<ellipse cx="783.3" cy="352.5" rx="13.6" ry="15.0" fill="#e2b89c" />
<ellipse cx="700" cy="351.0" rx="80.75" ry="69.0" fill="#efd2bd" />
<path d="M613.3,341.25 Q610.75,245 700,245 Q789.25,245 786.7,341.25 Q768.0,303.75 725.5,311.25 Q666.0,303.75 613.3,341.25 Z" fill="#6a4430" />
<ellipse cx="666.0" cy="360.0" rx="12.75" ry="14.025" fill="#2c1c16" />
<ellipse cx="669.825" cy="354.9" rx="3.8249999999999997" ry="3.8249999999999997" fill="#fff" />
<ellipse cx="734.0" cy="360.0" rx="12.75" ry="14.025" fill="#2c1c16" />
<ellipse cx="737.825" cy="354.9" rx="3.8249999999999997" ry="3.8249999999999997" fill="#fff" />
<ellipse cx="700" cy="386.25" rx="5.1" ry="3.75" fill="#a05050" />
<path d="M600 285 Q610 250 652 272 L640 312 Q608 316 600 285 Z" fill="#f2a62e" />
<path d="M802 292 Q792 256 754 274 L768 318 Q800 320 802 292 Z" fill="#f2a62e" />
<rect x="-10" y="520" width="1386" height="250" rx="0" fill="url(#shade)" />
<rect x="-10" y="-10" width="1386" height="790" rx="0" fill="url(#vig)" />
</g>
<rect x="0" y="757" width="1366" height="11" rx="0" fill="#d8d0c4" /></svg>
<svg class="a" style="left:21px;top:20px" width="26" height="24" viewBox="0 0 26 24"><path d="M1 8 H5 L11 2 V22 L5 16 H1 Z" fill="#fff" opacity=".95"/><path d="M14.5 7.8 L22.5 15.8 M22.5 7.8 L14.5 15.8" stroke="#fff" stroke-width="1.6"/></svg>
<div class="a" style="left:12px;top:230.5px;white-space:nowrap;font-size:17px;font-weight:bold;color:#fff;letter-spacing:0.2px">eduvibe98<span style="color:rgba(255,255,255,.5);font-size:15.5px;letter-spacing:0"> · 2025-11-21</span></div>
<div class="a" style="left:12px;top:264.5px;white-space:nowrap;font-size:14.6px;color:#fff;-webkit-text-stroke:0.25px #fff">Một chiếc video khởi động theo oder của cô giáo. Mimi rủ luôn cả lớp vào luôn</div>
<div class="a" style="left:527px;top:265px;white-space:nowrap;font-size:15px;font-weight:bold;color:#fff;letter-spacing:-0.3px">more</div>
<div class="a" style="left:12px;top:291px;white-space:nowrap;font-size:14.6px;font-weight:bold;color:rgba(255,255,255,.62)">See translation</div>

</div>

<!-- action bar -->
<svg class="a" style="left:863px;top:181px" width="48" height="48" viewBox="0 0 48 48"><defs><radialGradient id="avg" cx=".6" cy=".45" r=".6"><stop offset="0" stop-color="#4a6af0"/><stop offset=".7" stop-color="#2a30c8"/><stop offset="1" stop-color="#1a1a90"/></radialGradient><clipPath id="avc"><circle cx="24" cy="24" r="23.5"/></clipPath></defs><g clip-path="url(#avc)"><rect width="48" height="48" fill="url(#avg)"/><circle cx="36" cy="17" r="9" fill="#6aa8f8" opacity=".8"/><circle cx="36" cy="17" r="6" fill="#3060e0"/><path d="M20 40 Q26 30 34 33 Q42 36 44 40 L44 48 L18 48 Z" fill="#d8f0fa"/><path d="M12 32 L24 33 L20 40 L10 38 Z" fill="#e83040"/><text x="8" y="30" font-size="7.5" font-weight="bold" fill="#e8ecff" font-family="Liberation Sans" letter-spacing=".3">EDUVIBE</text><path d="M8 14 l3 -4 l3 4 z" fill="#c8d0ff"/></g></svg>
<div class="a" style="left:875px;top:218px;width:24px;height:24px;border-radius:50%;background:#fe2c55"></div>
<svg class="a" style="left:875px;top:218px" width="24" height="24" viewBox="0 0 24 24"><path d="M12 7 V17 M7 12 H17" stroke="#fff" stroke-width="1.8"/></svg>
<div class="a circ" style="left:863px;top:258px"></div>
<svg class="a" style="left:875px;top:270px" width="24" height="24" viewBox="0 0 24 24"><path d="M12 21.2 C11 20.5 1.5 14.5 1.5 8.2 A5.3 5.3 0 0 1 12 5.8 A5.3 5.3 0 0 1 22.5 8.2 C22.5 14.5 13 20.5 12 21.2 Z" fill="#ececec"/></svg>
<div class="a cnt" style="left:863px;top:312px">2084</div>
<div class="a circ" style="left:863px;top:336px"></div>
<svg class="a" style="left:875px;top:348px" width="24" height="24" viewBox="0 0 24 24"><path d="M12 1.8 C18.3 1.8 22.5 5.6 22.5 10.5 C22.5 15.3 18.6 18.6 13.6 18.9 C12.5 20.3 11 21.8 9.2 22.6 C9.8 21.3 10.2 20.1 10.2 18.8 C5.3 18.2 1.5 15 1.5 10.5 C1.5 5.6 5.7 1.8 12 1.8 Z" fill="#ececec"/><circle cx="7.3" cy="10.5" r="1.5" fill="#252525"/><circle cx="12" cy="10.5" r="1.5" fill="#252525"/><circle cx="16.7" cy="10.5" r="1.5" fill="#252525"/></svg>
<div class="a cnt" style="left:863px;top:390px">325</div>
<div class="a circ" style="left:863px;top:414px"></div>
<svg class="a" style="left:875px;top:426px" width="24" height="24" viewBox="0 0 24 24"><path d="M3.6 3.8 Q3.6 2.6 4.8 2.6 H19 Q20.2 2.6 20.2 3.8 V20.4 L11.9 16.3 L3.6 20.4 Z" fill="#ececec"/></svg>
<div class="a cnt" style="left:863px;top:468px">1121</div>
<div class="a circ" style="left:863px;top:492px"></div>
<svg class="a" style="left:875px;top:504px" width="24" height="24" viewBox="0 0 24 24"><path d="M13 2.5 L23.2 10.9 L13 19.4 V15.2 C7.8 15 4.2 17 1.2 20.2 C1.8 13.2 6 8.3 13 6.9 Z" fill="#ececec"/></svg>
<div class="a cnt" style="left:863px;top:546px">2354</div>
<svg class="a" style="left:866px;top:571px" width="42" height="42" viewBox="0 0 48 48"><defs><radialGradient id="avg2" cx=".6" cy=".45" r=".6"><stop offset="0" stop-color="#4a6af0"/><stop offset=".7" stop-color="#2a30c8"/><stop offset="1" stop-color="#1a1a90"/></radialGradient><clipPath id="avc2"><circle cx="24" cy="24" r="23.5"/></clipPath></defs><g clip-path="url(#avc2)"><rect width="48" height="48" fill="url(#avg2)"/><circle cx="36" cy="17" r="9" fill="#6aa8f8" opacity=".8"/><circle cx="36" cy="17" r="6" fill="#3060e0"/><path d="M20 40 Q26 30 34 33 Q42 36 44 40 L44 48 L18 48 Z" fill="#d8f0fa"/><path d="M12 32 L24 33 L20 40 L10 38 Z" fill="#e83040"/><text x="8" y="30" font-size="7.5" font-weight="bold" fill="#e8ecff" font-family="Liberation Sans" letter-spacing=".3">EDUVIBE</text><path d="M8 14 l3 -4 l3 4 z" fill="#c8d0ff"/></g></svg>

<div class="a circ" style="left:927px;top:342px;background:#161616"></div>
<svg class="a" style="left:939px;top:354px" width="24" height="24" viewBox="0 0 24 24"><path d="M4.5 15.5 L12 8 L19.5 15.5" fill="none" stroke="#5a5a5a" stroke-width="2.4"/></svg>
<div class="a circ" style="left:927px;top:406px;background:#232323"></div>
<svg class="a" style="left:939px;top:418px" width="24" height="24" viewBox="0 0 24 24"><path d="M4.5 8.5 L12 16 L19.5 8.5" fill="none" stroke="#fff" stroke-width="2.4"/></svg>

<!-- right panel -->
<div class="a" style="left:991px;top:80px;width:1px;height:636px;background:#1c1c1c"></div>
<div class="a" style="left:1165px;top:104px;width:172px;height:48px;border-radius:24px;background:#252525"></div>
<svg class="a" style="left:1181px;top:120px" width="17" height="17" viewBox="0 0 17 17"><circle cx="8.5" cy="8.5" r="6.7" fill="none" stroke="#eee" stroke-width="1.4"/><path d="M9 4.5 V10.5 A1.9 1.9 0 1 1 7.1 8.6 M9 4.5 Q9.4 6.2 11.5 6.5" fill="none" stroke="#eee" stroke-width="1.4"/></svg>
<svg class="a" style="left:1214px;top:119px" width="14" height="18" viewBox="0 0 14 18"><rect x="2.2" y="1.8" width="9.6" height="14.6" rx="1.8" fill="none" stroke="#eee" stroke-width="1.4"/><path d="M5.8 13.8 H8.2" stroke="#eee" stroke-width="1.2"/></svg>
<div class="a" style="left:1245px;top:116px;width:1px;height:26px;background:#3c3c3c"></div>
<div class="a" style="left:1254px;top:112px;width:76px;height:32px;border-radius:16px;background:#fe2c55;color:#fff;font-weight:bold;font-size:15.5px;text-align:center;line-height:34px;letter-spacing:-0.4px">Log in</div>
<div class="a" style="left:1016px;top:195px;width:322px;height:1px;background:#2e2e2e"></div>
<div class="a" style="left:1187px;top:194px;width:141px;height:2px;background:#fff"></div>
<div class="a" style="left:1016px;top:167px;width:161px;text-align:center;font-weight:bold;font-size:15px;color:#e6e6e6;letter-spacing:-0.2px">Comments</div>
<div class="a" style="left:1187px;top:167px;width:141px;text-align:center;font-weight:bold;font-size:15px;color:#fff;letter-spacing:-0.2px">You may like</div>

<div id="card1" class="a" style="left:1016px;top:220px;width:150px;height:202px;border-radius:8px;overflow:hidden;background:#8a9a70"><svg class="a" style="left:0;top:0" width="150" height="202" viewBox="0 0 150 202"><defs><filter id="b4" x="-20%" y="-20%" width="140%" height="140%"><feGaussianBlur stdDeviation="6"/></filter><filter id="b1"><feGaussianBlur stdDeviation=".6"/></filter></defs><g filter="url(#b4)"><rect x="-10" y="-10" width="170" height="60" rx="0" fill="#9aa882" /><ellipse cx="30" cy="20" rx="30" ry="25" fill="#6f8a58" /><ellipse cx="85" cy="25" rx="35" ry="22" fill="#c2c2b0" /><ellipse cx="140" cy="25" rx="25" ry="25" fill="#7c9462" /></g><g filter="url(#b1)"><rect x="0" y="47" width="150" height="108" rx="0" fill="#e9ebe6" /><path d="M0 60 Q20 50 35 58 Q50 48 70 56 Q95 45 120 55 Q135 50 150 54 L150 95 L0 95 Z" fill="#6e9a5c" /><ellipse cx="20" cy="70" rx="22" ry="14" fill="#5a8a4c" /><ellipse cx="120" cy="66" rx="28" ry="16" fill="#5c8c4e" /><path d="M53 71 Q75 58 97 71 Z" fill="#d9c9c8" /><rect x="52" y="71" width="46" height="3" rx="0" fill="#b9a9a0" /><rect x="49" y="49" width="52" height="5" rx="0" fill="#222" /><rect x="0" y="86" width="150" height="36" rx="0" fill="#6a5e5c" /><ellipse cx="4" cy="100" rx="4" ry="5" fill="#9ab0c8" /><ellipse cx="13" cy="100" rx="4" ry="5" fill="#6a4a48" /><ellipse cx="22" cy="100" rx="4" ry="5" fill="#9ab0c8" /><ellipse cx="31" cy="100" rx="4" ry="5" fill="#6a4a48" /><ellipse cx="40" cy="100" rx="4" ry="5" fill="#9ab0c8" /><ellipse cx="49" cy="100" rx="4" ry="5" fill="#6a4a48" /><ellipse cx="58" cy="100" rx="4" ry="5" fill="#9ab0c8" /><ellipse cx="67" cy="100" rx="4" ry="5" fill="#6a4a48" /><ellipse cx="76" cy="100" rx="4" ry="5" fill="#9ab0c8" /><ellipse cx="85" cy="100" rx="4" ry="5" fill="#6a4a48" /><ellipse cx="94" cy="100" rx="4" ry="5" fill="#9ab0c8" /><ellipse cx="103" cy="100" rx="4" ry="5" fill="#6a4a48" /><ellipse cx="112" cy="100" rx="4" ry="5" fill="#9ab0c8" /><ellipse cx="121" cy="100" rx="4" ry="5" fill="#6a4a48" /><ellipse cx="130" cy="100" rx="4" ry="5" fill="#9ab0c8" /><ellipse cx="139" cy="100" rx="4" ry="5" fill="#6a4a48" /><ellipse cx="148" cy="100" rx="4" ry="5" fill="#9ab0c8" /><rect x="0" y="84" width="150" height="1.5" rx="0" fill="#f2f2f2" /><rect x="0" y="108" width="150" height="1.5" rx="0" fill="#f2f2f2" /><rect x="0" y="122" width="150" height="34" rx="0" fill="#bca685" /><rect x="0" y="143" width="150" height="1.5" rx="0" fill="#f2efe6" /><rect x="59" y="111" width="10" height="12" rx="0" fill="#e0403a" /><rect x="60" y="123" width="8" height="5" rx="0" fill="#222" /><rect x="60" y="128" width="3" height="16" rx="0" fill="#e8c0a0" /><rect x="65" y="128" width="3" height="16" rx="0" fill="#e8c0a0" /><ellipse cx="64" cy="107" rx="3.5" ry="4" fill="#e0b090" /><rect x="0" y="106" width="10" height="22" rx="0" fill="#b8d0e4" /><rect x="12" y="96" width="9" height="22" rx="0" fill="#a8c4dc" /><rect x="25" y="96" width="10" height="22" rx="0" fill="#a8c4dc" /><rect x="46" y="96" width="9" height="22" rx="0" fill="#a8c4dc" /><rect x="83" y="96" width="9" height="22" rx="0" fill="#a8c4dc" /><rect x="120" y="108" width="28" height="12" rx="0" fill="#7a4a80" /></g><g filter="url(#b4)"><rect x="-10" y="155" width="170" height="60" rx="0" fill="#b49a80" /><ellipse cx="55" cy="175" rx="25" ry="20" fill="#b07e6e" /></g></svg></div>
<div id="card2" class="a" style="left:1188px;top:220px;width:150px;height:202px;border-radius:8px;overflow:hidden;background:#3a4a30"><svg class="a" style="left:0;top:0" width="150" height="202" viewBox="0 0 150 202"><defs><filter id="b4" x="-20%" y="-20%" width="140%" height="140%"><feGaussianBlur stdDeviation="6"/></filter><filter id="b1"><feGaussianBlur stdDeviation=".6"/></filter></defs><g filter="url(#b4)"><rect x="-10" y="-10" width="170" height="75" rx="0" fill="#8e7a62" /><ellipse cx="15" cy="25" rx="25" ry="35" fill="#cfc49a" /><ellipse cx="70" cy="20" rx="40" ry="30" fill="#a08a6a" /><ellipse cx="135" cy="30" rx="25" ry="30" fill="#3c3a38" /></g><rect x="22" y="32" width="106" height="11" rx="2" fill="#2ec0a0" /><text x="68" y="40.5" font-size="7" fill="#fff" text-anchor="middle" font-family="Liberation Sans">Cụ khởi động ảo ma vcc</text><ellipse cx="113" cy="37.5" rx="3" ry="3" fill="#f4c430" /><ellipse cx="120" cy="37.5" rx="3" ry="3" fill="#f4c430" /><g filter="url(#b1)"><rect x="0" y="59" width="150" height="84" rx="0" fill="#b8a68a" /><rect x="0" y="59" width="55" height="45" rx="0" fill="#cdc6b6" /><rect x="60" y="59" width="32" height="40" rx="0" fill="#a08868" /><rect x="92" y="59" width="58" height="40" rx="0" fill="#c0aa88" /><rect x="0" y="62" width="18" height="40" rx="0" fill="#8a9aaa" /><rect x="10" y="76" width="10" height="34" rx="0" fill="#9aa2b0" /><ellipse cx="15" cy="72" rx="4" ry="4" fill="#d8b090" /><rect x="26" y="72" width="18" height="25" rx="0" fill="#4a4a8a" /><ellipse cx="35" cy="68" rx="4" ry="4" fill="#d8b090" /><rect x="28" y="97" width="14" height="15" rx="0" fill="#556" /><rect x="92" y="78" width="28" height="22" rx="0" fill="#2a2a2e" /><rect x="100" y="80" width="14" height="12" rx="0" fill="#e8e8ea" /><rect x="112" y="80" width="22" height="22" rx="0" fill="#e6e6e6" /><ellipse cx="121" cy="76" rx="4" ry="4" fill="#d8b090" /><rect x="0" y="108" width="150" height="35" rx="0" fill="#7a7a72" /><path d="M22 104 L134 100 L139 127 L20 131 Z" fill="#8a6a58" /><path d="M24 104 L130 101 L136 122 L22 126 Z" fill="#3aa640" /><rect x="49" y="131" width="50" height="9" rx="2" fill="#2ec0a0" /><text x="70" y="138" font-size="5.5" fill="#fff" text-anchor="middle" font-family="Liberation Sans">Chưa hi ai</text><ellipse cx="88" cy="135.5" rx="2.2" ry="2.2" fill="#fff" /><ellipse cx="93" cy="135.5" rx="2.2" ry="2.2" fill="#fff" /><ellipse cx="88" cy="135.5" rx="1.1" ry="1.1" fill="#222" /><ellipse cx="93" cy="135.5" rx="1.1" ry="1.1" fill="#222" /></g><g filter="url(#b4)"><rect x="-10" y="143" width="170" height="38" rx="0" fill="#3fae48" /><rect x="-10" y="178" width="170" height="30" rx="0" fill="#6c6c62" /></g></svg></div>
<div class="a ttl" style="left:1016px;top:429px;width:135px">Thanh Hoài khởi<br>động như đốt...</div>
<div class="a ttl" style="left:1188px;top:429px;width:135px">#billiards #pool<br>#trickshot...</div>
<svg class="a" style="left:1155px;top:431px" width="6" height="14" viewBox="0 0 6 14"><circle cx="3" cy="2" r="1.4" fill="#ddd"/><circle cx="3" cy="7" r="1.4" fill="#ddd"/><circle cx="3" cy="12" r="1.4" fill="#ddd"/></svg>
<svg class="a" style="left:1327px;top:431px" width="6" height="14" viewBox="0 0 6 14"><circle cx="3" cy="2" r="1.4" fill="#ddd"/><circle cx="3" cy="7" r="1.4" fill="#ddd"/><circle cx="3" cy="12" r="1.4" fill="#ddd"/></svg>
<div class="a sub" style="left:1016px;top:478px">thethaodiary</div>
<div class="a sub" style="left:1188px;top:478px">nhobilliardshop</div>
<svg class="a" style="left:1016px;top:499px" width="16" height="15" viewBox="0 0 16 15"><path d="M8 13.5 C4 10.5 1.2 8.3 1.2 5.2 A3.4 3.4 0 0 1 8 3.6 A3.4 3.4 0 0 1 14.8 5.2 C14.8 8.3 12 10.5 8 13.5 Z" fill="none" stroke="#ccc" stroke-width="1.3"/></svg>
<div class="a sub" style="left:1036px;top:499px;color:#d0d0d0;word-spacing:2px">4060 · 2-12</div>
<svg class="a" style="left:1188px;top:499px" width="16" height="15" viewBox="0 0 16 15"><path d="M8 13.5 C4 10.5 1.2 8.3 1.2 5.2 A3.4 3.4 0 0 1 8 3.6 A3.4 3.4 0 0 1 14.8 5.2 C14.8 8.3 12 10.5 8 13.5 Z" fill="none" stroke="#ccc" stroke-width="1.3"/></svg>
<div class="a sub" style="left:1208px;top:499px;color:#d0d0d0;word-spacing:2px">22.2K · 1-17</div>

<div id="card3" class="a" style="left:1016px;top:539px;width:150px;height:177px;overflow:hidden;background:#000"><svg class="a" style="left:0;top:0" width="150" height="177" viewBox="0 0 150 177"><defs><filter id="b4" x="-20%" y="-20%" width="140%" height="140%"><feGaussianBlur stdDeviation="6"/></filter><filter id="b1"><feGaussianBlur stdDeviation=".6"/></filter></defs><rect x="0" y="0" width="150" height="177" rx="0" fill="#000" /><rect x="0" y="19.6" width="150" height="36" rx="4" fill="#f7d00e" /><text x="75" y="30.5" font-size="9.6" fill="#222" letter-spacing=".1" text-anchor="middle" font-family="Liberation Sans">Bài hát khởi động</text><text x="75" y="39" font-size="9.6" fill="#222" letter-spacing=".1" text-anchor="middle" font-family="Liberation Sans">"Ngày xuân long phụng sum vầy"</text><text x="75" y="47.5" font-size="9.6" fill="#222" letter-spacing=".1" text-anchor="middle" font-family="Liberation Sans">Cực hot, cực sôi động.</text><g filter="url(#b1)"><rect x="0" y="59" width="150" height="85" rx="0" fill="#6aa8e0" /><ellipse cx="118" cy="65" rx="15" ry="6" fill="#f4f6fa" /><ellipse cx="55" cy="77" rx="12" ry="4" fill="#eef2f8" /><rect x="0" y="80" width="150" height="16" rx="0" fill="#c88860" /><rect x="0" y="84" width="150" height="3" rx="0" fill="#e0b080" /><path d="M0 68 L28 88 L28 130 L0 130 Z" fill="#c07858" /><path d="M150 68 L122 88 L122 130 L150 130 Z" fill="#c07858" /><rect x="28" y="92" width="94" height="38" rx="0" fill="#8a7060" /><ellipse cx="15" cy="110" rx="18" ry="16" fill="#e8a8c0" /><ellipse cx="133" cy="110" rx="18" ry="16" fill="#e0c040" /><rect x="47" y="93" width="55" height="22" rx="0" fill="#c83c28" /><rect x="52" y="96" width="45" height="16" rx="0" fill="#e05a30" /><rect x="0" y="126" width="150" height="18" rx="0" fill="#d8cbbb" /><rect x="35.0" y="115" width="6" height="18" rx="0" fill="#e05040" /><ellipse cx="38.0" cy="113" rx="3" ry="3" fill="#f0d0b0" /><rect x="44.5" y="115" width="6" height="18" rx="0" fill="#4070d0" /><ellipse cx="47.5" cy="113" rx="3" ry="3" fill="#f0d0b0" /><rect x="54.0" y="115" width="6" height="18" rx="0" fill="#f0c040" /><ellipse cx="57.0" cy="113" rx="3" ry="3" fill="#f0d0b0" /><rect x="63.5" y="115" width="6" height="18" rx="0" fill="#e080b0" /><ellipse cx="66.5" cy="113" rx="3" ry="3" fill="#f0d0b0" /><rect x="73.0" y="115" width="6" height="18" rx="0" fill="#d03030" /><ellipse cx="76.0" cy="113" rx="3" ry="3" fill="#f0d0b0" /><rect x="82.5" y="115" width="6" height="18" rx="0" fill="#e05040" /><ellipse cx="85.5" cy="113" rx="3" ry="3" fill="#f0d0b0" /><rect x="92.0" y="115" width="6" height="18" rx="0" fill="#60b050" /><ellipse cx="95.0" cy="113" rx="3" ry="3" fill="#f0d0b0" /><rect x="101.5" y="115" width="6" height="18" rx="0" fill="#40a060" /><ellipse cx="104.5" cy="113" rx="3" ry="3" fill="#f0d0b0" /><rect x="111.0" y="115" width="6" height="18" rx="0" fill="#4060c0" /><ellipse cx="114.0" cy="113" rx="3" ry="3" fill="#f0d0b0" /><rect x="75" y="100" width="8" height="34" rx="0" fill="#d02828" /><ellipse cx="79" cy="99" rx="4" ry="4" fill="#f0d0b0" /></g><rect x="0" y="145.6" width="150" height="40" rx="4" fill="#f7d00e" /><text x="75" y="157" font-size="9.8" fill="#222" letter-spacing=".1" text-anchor="middle" font-family="Liberation Sans">Nhận làm video AI theo yêu cầu.</text><text x="75" y="165.5" font-size="9.8" fill="#222" letter-spacing=".1" text-anchor="middle" font-family="Liberation Sans">Cung cấp tài khoản Veo3 uy tín,</text><text x="75" y="174" font-size="9.8" fill="#222" letter-spacing=".1" text-anchor="middle" font-family="Liberation Sans">chất lượng, bảo hành 1 đổi 1.</text></svg></div>
<div id="card4" class="a" style="left:1188px;top:539px;width:150px;height:177px;border-radius:8px 8px 0 0;overflow:hidden;background:#7a6a60"><svg class="a" style="left:0;top:0" width="150" height="177" viewBox="0 0 150 177"><defs><filter id="b4" x="-20%" y="-20%" width="140%" height="140%"><feGaussianBlur stdDeviation="6"/></filter><filter id="b1"><feGaussianBlur stdDeviation=".6"/></filter></defs><g filter="url(#b4)"><rect x="-10" y="-10" width="170" height="60" rx="0" fill="#a39280" /><rect x="-10" y="-10" width="170" height="18" rx="0" fill="#8a7090" /><ellipse cx="20" cy="30" rx="20" ry="25" fill="#6a5a50" /><ellipse cx="100" cy="35" rx="40" ry="12" fill="#b8a890" /></g><g filter="url(#b1)"><rect x="0" y="47" width="150" height="60" rx="0" fill="#a89c8e" /><rect x="49" y="47" width="52" height="22" rx="0" fill="#7a5aa8" /><rect x="62" y="48" width="18" height="10" rx="0" fill="#f0eef4" /><rect x="92" y="48" width="10" height="21" rx="0" fill="#404048" /><rect x="36" y="69" width="72" height="36" rx="0" fill="#c0b4a0" /><rect x="36" y="69" width="10" height="36" rx="0" fill="#2a2828" /><rect x="0" y="84" width="36" height="24" rx="0" fill="#3a3634" /><rect x="0" y="76" width="14" height="8" rx="0" fill="#305070" /><ellipse cx="135" cy="70" rx="18" ry="22" fill="#4a5038" /><rect x="112" y="75" width="12" height="28" rx="0" fill="#d8d6d0" /><rect x="124" y="92" width="16" height="14" rx="0" fill="#f0f0f0" /><rect x="0" y="104" width="150" height="73" rx="0" fill="#c0a27e" /><path d="M44 80 Q55 72 64 80 L66 104 L44 104 Z" fill="#2a2020" /><ellipse cx="54" cy="85" rx="6" ry="7" fill="#e0c0a8" /><path d="M37 104 Q55 96 73 104 L74 140 L40 140 Z" fill="#6a6258" /><path d="M28 115 Q34 103 42 103 L40 130 L30 130 Z" fill="#e0c0a8" /><path d="M72 103 Q78 106 78 130 L70 130 Z" fill="#e0c0a8" /><ellipse cx="55" cy="138" rx="12" ry="5" fill="#e8e4e0" /><path d="M94 80 Q102 75 108 80 L110 98 L94 98 Z" fill="#8a5a40" /><ellipse cx="101" cy="86" rx="5" ry="6" fill="#e8c8b0" /><path d="M86 100 Q100 93 115 100 L120 120 L88 120 Z" fill="#ece6de" /></g><rect x="21" y="145" width="109" height="40" rx="0" fill="#000" /><rect x="21" y="145" width="3" height="40" rx="0" fill="#2ed8e0" /><rect x="126" y="148" width="4" height="37" rx="0" fill="#e82030" /><text x="75" y="157" font-size="5.4" fill="#fff" font-weight="bold" text-anchor="middle" font-family="Liberation Sans">Nơi chữ hóa điên với</text><text x="75" y="164" font-size="5.6" fill="#fff" font-weight="bold" text-anchor="middle" font-family="Liberation Sans">Chaewon ( LE SSERAFIM )</text><text x="75" y="170.5" font-size="5.6" fill="#fff" font-weight="bold" text-anchor="middle" font-family="Liberation Sans">sau khi tập xong bài khởi động</text><text x="75" y="177" font-size="5.6" fill="#fff" font-weight="bold" text-anchor="middle" font-family="Liberation Sans">của Kazuha</text></svg></div>

<!-- taskbar -->
<div id="taskbar" class="a"></div>
<div class="a" style="left:0;top:716px;width:1366px;height:4px;background:#f3f3f3"></div><svg class="a" style="left:21px;top:733px" width="23" height="23" viewBox="0 0 23 23"><defs><linearGradient id="wg" x1="0" y1="0" x2="1" y2="1"><stop offset="0" stop-color="#3ec0f5"/><stop offset="1" stop-color="#0a6fd0"/></linearGradient></defs><rect x="0" y="0" width="11" height="11" fill="url(#wg)"/><rect x="12" y="0" width="11" height="11" fill="url(#wg)"/><rect x="0" y="12" width="11" height="11" fill="url(#wg)"/><rect x="12" y="12" width="11" height="11" fill="url(#wg)"/></svg><svg class="a" style="left:65px;top:732px" width="23" height="24" viewBox="0 0 23 24"><rect x="9" y="3" width="13" height="18" fill="#fff" stroke="#d24726" stroke-width="1.2"/><path d="M13 7 a3 3 0 1 0 3 3 h-3z" fill="#d24726"/><path d="M14 14 h6 M14 17 h6" stroke="#d24726" stroke-width="1"/><path d="M0 3 L13 0.5 V23.5 L0 21 Z" fill="#c43e1c"/><text x="3" y="16" font-size="10" font-weight="bold" fill="#fff" font-family="Liberation Sans">P</text></svg><div class="a" style="left:74px;top:760px;width:6px;height:3px;border-radius:2px;background:#8a8a8a"></div><svg class="a" style="left:109px;top:732px" width="24" height="24" viewBox="0 0 24 24"><circle cx="12" cy="12" r="12" fill="#db4437"/><path d="M12 12 L1.6 18 A12 12 0 0 0 12 24 Z" fill="#0f9d58"/><path d="M1.6 18 A12 12 0 0 1 1.6 6 L12 12Z" fill="#0f9d58"/><path d="M12 12 L22.4 6 A12 12 0 0 1 12 24 Z" fill="#f4b400"/><circle cx="12" cy="12" r="5.5" fill="#fff"/><circle cx="12" cy="12" r="4.3" fill="#4285f4"/></svg><div class="a" style="left:146px;top:726px;width:38px;height:37px;border-radius:5px;background:#f7f7f7;border:1px solid #e4e4e4"></div><svg class="a" style="left:153px;top:732px" width="24" height="24" viewBox="0 0 24 24"><defs><linearGradient id="eg" x1="0" y1="0" x2="1" y2="1"><stop offset="0" stop-color="#35c1f1"/><stop offset=".5" stop-color="#1b8fd8"/><stop offset="1" stop-color="#0c59a4"/></linearGradient><linearGradient id="eg2" x1="0" y1="0" x2="1" y2="0"><stop offset="0" stop-color="#2fb8e8"/><stop offset="1" stop-color="#58d05a"/></linearGradient></defs><path d="M12 0.5 A11.5 11.5 0 0 1 23.5 12 C23.5 16 20 17 17 16.5 C13 16 12 13 14 11 C15 10 12 7 8 8 C4 9 1 13 2 18 A11.5 11.5 0 0 1 12 0.5 Z" fill="url(#eg2)"/><path d="M2 18 C1 13 4 9 8 8 C12 7 15 10 14 11 C10 12 9 17 13 20 C16 22 20 21 22 18 A11.5 11.5 0 0 1 2 18 Z" fill="url(#eg)"/><circle cx="7.5" cy="17" r="4.5" fill="#b0b4b8"/><circle cx="7.5" cy="15.5" r="1.8" fill="#707478"/></svg><div class="a" style="left:157px;top:760px;width:16px;height:3px;border-radius:2px;background:#1f6fc8"></div><svg class="a" style="left:197px;top:732px" width="24" height="24" viewBox="0 0 24 24"><circle cx="12" cy="12" r="12" fill="#000"/><path d="M12.8 6 V15 A2.7 2.7 0 1 1 10.1 12.3" fill="none" stroke="#25f4ee" stroke-width="2" transform="translate(-.7,.5)"/><path d="M12.8 6 V15 A2.7 2.7 0 1 1 10.1 12.3 M12.8 6 Q13.3 8.5 16.3 8.8" fill="none" stroke="#fe2c55" stroke-width="2" transform="translate(.6,-.3)"/><path d="M12.8 6 V15 A2.7 2.7 0 1 1 10.1 12.3 M12.8 6 Q13.3 8.5 16.3 8.8" fill="none" stroke="#fff" stroke-width="1.9"/></svg><svg class="a" style="left:240px;top:732px" width="26" height="23" viewBox="0 0 26 23"><path d="M1 2 H9 L11 4 H25 V21 H1 Z" fill="#e8a820"/><rect x="1" y="5" width="24" height="17" fill="#f8c844"/><rect x="5" y="14" width="16" height="8" rx="1" fill="#1a7fd0"/></svg><svg class="a" style="left:285px;top:732px" width="24" height="24" viewBox="0 0 24 24"><circle cx="12" cy="12" r="11.5" fill="#fff"/><path d="M4 4 A11 11 0 0 0 18 22" fill="none" stroke="#1d5fd6" stroke-width="2.2"/><text x="12" y="15" font-size="8" font-weight="bold" fill="#1d5fd6" text-anchor="middle" font-family="Liberation Sans">Zalo</text></svg><div class="a" style="left:294px;top:760px;width:6px;height:3px;border-radius:2px;background:#8a8a8a"></div><svg class="a" style="left:329px;top:732px" width="24" height="24" viewBox="0 0 24 24"><circle cx="11" cy="13" r="10" fill="#7cc250"/><circle cx="11" cy="13" r="5" fill="#fff"/><circle cx="11" cy="13" r="3" fill="#6ab040"/><path d="M13 2 L14 6 M17 3 L16 7 M22 7 L18 9" stroke="#e05a30" stroke-width="2"/><path d="M20 12 L16 13" stroke="#e05a30" stroke-width="2"/></svg><div class="a" style="left:338px;top:760px;width:6px;height:3px;border-radius:2px;background:#8a8a8a"></div><svg class="a" style="left:1098px;top:739px" width="12" height="9" viewBox="0 0 12 9"><path d="M1 7.5 L6 2 L11 7.5" fill="none" stroke="#222" stroke-width="1.3"/></svg><svg class="a" style="left:1128px;top:736px" width="16" height="16" viewBox="0 0 16 16"><rect x=".5" y=".5" width="15" height="15" fill="#f3d0d0" stroke="#b9a0a0"/><path d="M3.5 3 L8 13 L12.5 3" fill="none" stroke="#c81818" stroke-width="2.2"/></svg><div class="a" style="left:1158px;top:731px;width:32px;text-align:center;font-size:12px;color:#1a1a1a;line-height:15.5px">ENG<br>UK</div><svg class="a" style="left:1204px;top:737px" width="16" height="13" viewBox="0 0 16 13"><path d="M1 5 A10 10 0 0 1 15 5 M3.3 7.5 A7 7 0 0 1 12.7 7.5 M5.6 10 A4 4 0 0 1 10.4 10" fill="none" stroke="#1a1a1a" stroke-width="1.3"/><circle cx="8" cy="12" r="1.2" fill="#1a1a1a"/></svg><svg class="a" style="left:1227px;top:736px" width="16" height="16" viewBox="0 0 16 16"><path d="M1.5 5.5 H4.5 L8.5 2 V14 L4.5 10.5 H1.5 Z" fill="none" stroke="#1a1a1a" stroke-width="1.1"/><path d="M10.5 5.5 Q12 8 10.5 10.5 M12.5 3.5 Q15.5 8 12.5 12.5" fill="none" stroke="#1a1a1a" stroke-width="1.1"/></svg><svg class="a" style="left:1251px;top:735px" width="18" height="16" viewBox="0 0 18 16"><rect x="1" y="5" width="14" height="9" rx="1.5" fill="none" stroke="#1a1a1a" stroke-width="1.2"/><rect x="2.5" y="6.5" width="11" height="6" fill="#1a1a1a"/><rect x="15" y="8" width="2" height="3" fill="#1a1a1a"/><path d="M5 1 L3 5 H6 L4.5 8" fill="none" stroke="#1a1a1a" stroke-width="1.1"/></svg><div class="a" style="left:1266px;top:729px;width:81px;text-align:right;font-size:12px;letter-spacing:.15px;color:#1a1a1a;line-height:16px">22:06<br>08/03/2026</div>
</body></html>
